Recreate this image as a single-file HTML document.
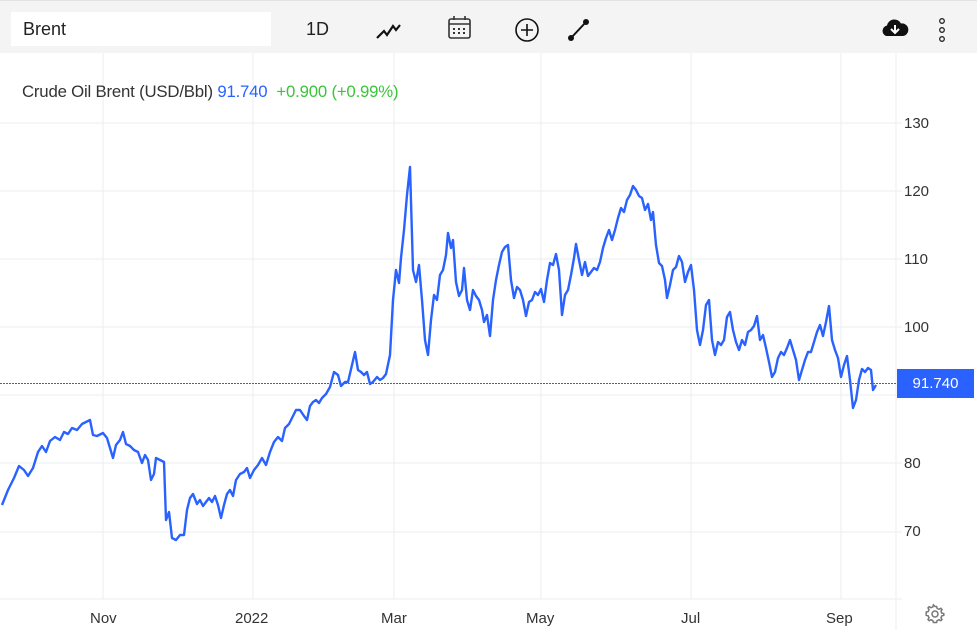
<!DOCTYPE html>
<html><head><style>
body{margin:0;width:977px;height:641px;background:#fff;font-family:"Liberation Sans",sans-serif;overflow:hidden;position:relative}
.tb{position:absolute;left:0;top:0;width:977px;height:53px;background:#f4f4f4;border-top:1px solid #e4e4e4;box-sizing:border-box}
.search{position:absolute;left:11px;top:11px;width:260px;height:34px;background:#fff;font-size:18px;line-height:34px;padding-left:12px;box-sizing:border-box;color:#222}
.t{position:absolute;font-size:18px;color:#222}
.ax{position:absolute;font-size:15px;color:#333}
</style></head><body>
<div class="tb">
<div class="search">Brent</div>
<div class="t" style="left:306px;top:18px">1D</div>
<svg style="position:absolute;left:0;top:0" width="977" height="53">
<path d="M377 37 L384 30 L387 34 L393 25 L396 29 L400 24" stroke="#111" stroke-width="2.2" fill="none"/>
<rect x="449" y="18" width="21" height="19" rx="2" stroke="#333" stroke-width="1.6" fill="none"/>
<line x1="449" y1="23" x2="470" y2="23" stroke="#333" stroke-width="1.6"/>
<line x1="454" y1="15" x2="454" y2="19" stroke="#333" stroke-width="1.6"/><line x1="465" y1="15" x2="465" y2="19" stroke="#333" stroke-width="1.6"/>
<g fill="#333"><rect x="453" y="27" width="2" height="2"/><rect x="458" y="27" width="2" height="2"/><rect x="463" y="27" width="2" height="2"/><rect x="453" y="31" width="2" height="2"/><rect x="458" y="31" width="2" height="2"/><rect x="463" y="31" width="2" height="2"/></g>
<circle cx="527" cy="29" r="11" stroke="#111" stroke-width="1.6" fill="none"/>
<path d="M527 23 V35 M521 29 H533" stroke="#111" stroke-width="1.6"/>
<line x1="571" y1="37" x2="586" y2="21" stroke="#111" stroke-width="2"/>
<circle cx="571" cy="37" r="3" fill="#111"/><circle cx="586" cy="21" r="3" fill="#111"/>
<path d="M886 35 a5.5 5.5 0 0 1 1 -10.5 a7.5 7.5 0 0 1 14 -2 a6 6 0 0 1 2 12.5 z" fill="#111"/>
<path d="M895 24 V31 M891 28 L895 32 L899 28" stroke="#fff" stroke-width="2" fill="none"/>
<circle cx="942" cy="20" r="2.3" stroke="#222" stroke-width="1.3" fill="none"/>
<circle cx="942" cy="29" r="2.3" stroke="#222" stroke-width="1.3" fill="none"/>
<circle cx="942" cy="38" r="2.3" stroke="#222" stroke-width="1.3" fill="none"/>
</svg>
</div>
<svg style="position:absolute;left:0;top:53px" width="977" height="588" viewBox="0 53 977 588">
<g stroke="#eef0f3" stroke-width="1.3">
<line x1="103" y1="53" x2="103" y2="599"/><line x1="253" y1="53" x2="253" y2="599"/><line x1="394" y1="53" x2="394" y2="599"/><line x1="541" y1="53" x2="541" y2="599"/><line x1="691" y1="53" x2="691" y2="599"/><line x1="841" y1="53" x2="841" y2="599"/>
<line x1="0" y1="123" x2="902" y2="123"/><line x1="0" y1="191" x2="902" y2="191"/><line x1="0" y1="259" x2="902" y2="259"/><line x1="0" y1="327" x2="902" y2="327"/><line x1="0" y1="395" x2="902" y2="395"/><line x1="0" y1="463" x2="902" y2="463"/><line x1="0" y1="532" x2="902" y2="532"/>
<line x1="0" y1="599" x2="902" y2="599"/><line x1="896" y1="53" x2="896" y2="630"/>
</g>
<line x1="0" y1="383.5" x2="896" y2="383.5" stroke="#2962ff" stroke-width="1" stroke-dasharray="2 1"/>
<polyline fill="none" stroke="#2962ff" stroke-width="2.4" stroke-linejoin="round" points="2,505 8,490 14,478 19,466 24,470 28,476 33,468 38,452 42,446 46,452 50,441 55,437 60,440 64,432 68,434 72,428 77,430 82,424 86,422 90,420 93,435 97,436 103,433 107,438 110,448 113,458 116,445 120,440 123,432 126,444 130,446 134,450 138,452 142,463 145,455 148,460 151,480 154,474 156,458 160,460 164,462 166,520 169,512 172,538 176,540 180,535 184,535 187,510 190,498 193,494 197,504 200,500 203,506 206,502 209,498 212,502 215,496 218,505 221,518 224,505 227,494 230,490 233,496 236,480 240,474 244,472 247,468 250,478 254,470 258,465 262,458 266,465 270,452 274,442 278,437 282,441 285,428 289,424 293,416 296,410 300,410 304,416 307,420 310,406 313,402 316,400 319,403 322,398 326,394 330,387 334,372 338,375 341,386 345,382 348,382 352,365 355,352 358,370 361,372 364,375 367,372 370,384 373,382 377,377 380,380 383,378 386,374 390,355 393,300 396,270 399,283 401,258 404,230 407,195 410,167 413,270 416,282 419,265 422,300 425,340 428,355 431,320 434,295 437,300 440,275 443,270 446,255 448,233 451,248 453,240 456,282 459,296 462,290 464,268 467,300 470,310 473,290 476,296 479,300 482,310 484,322 487,315 490,336 493,300 496,280 499,265 502,252 505,247 508,245 511,280 514,298 517,287 520,290 523,300 526,316 529,302 532,300 535,292 538,295 541,289 544,302 547,280 550,263 553,265 556,254 559,270 562,315 565,295 568,290 571,275 574,258 576,244 579,260 582,275 585,262 588,276 591,272 594,268 597,270 600,262 603,248 606,238 609,230 612,240 615,230 618,218 621,208 624,212 627,200 630,195 633,186 636,190 639,196 642,198 645,210 648,204 651,220 653,212 656,245 659,263 662,266 665,280 667,298 670,285 673,270 676,267 679,256 682,262 685,282 688,272 691,265 694,290 697,330 700,345 703,330 706,305 709,300 712,340 715,355 718,342 721,345 724,340 727,317 730,312 733,330 736,342 739,350 742,340 745,345 748,332 751,330 754,326 757,316 760,340 763,335 766,348 769,362 772,377 775,372 778,358 781,352 784,355 787,348 790,340 793,350 796,360 799,380 802,370 805,360 808,352 811,352 814,342 817,332 820,325 823,336 826,322 829,306 832,340 835,350 838,358 841,377 844,365 847,356 850,380 853,408 856,400 859,380 862,369 865,372 868,368 871,370 873,390 876,385"/>
<g stroke="#777" stroke-width="1.5" fill="none"><circle cx="935" cy="614" r="3"/><path d="M935 606.5 l1.6 0 l0.6 2 l1.8 0.8 l1.8 -1 l1.2 1.2 l-1 1.8 l0.8 1.8 l2 0.6 l0 1.6 l-2 0.6 l-0.8 1.8 l1 1.8 l-1.2 1.2 l-1.8 -1 l-1.8 0.8 l-0.6 2 l-3.2 0 l-0.6 -2 l-1.8 -0.8 l-1.8 1 l-1.2 -1.2 l1 -1.8 l-0.8 -1.8 l-2 -0.6 l0 -3.2 l2 -0.6 l0.8 -1.8 l-1 -1.8 l1.2 -1.2 l1.8 1 l1.8 -0.8 l0.6 -2 z"/></g>
</svg>
<div class="ax" style="left:22px;top:82px;font-size:16.8px;color:#333;letter-spacing:-0.2px">Crude Oil Brent (USD/Bbl) <span style="color:#2962ff">91.740</span>&nbsp; <span style="color:#3cc43c">+0.900 (+0.99%)</span></div>
<div class="ax" style="left:904px;top:115px">130</div>
<div class="ax" style="left:904px;top:183px">120</div>
<div class="ax" style="left:904px;top:251px">110</div>
<div class="ax" style="left:904px;top:319px">100</div>
<div class="ax" style="left:904px;top:455px">80</div>
<div class="ax" style="left:904px;top:523px">70</div>
<div style="position:absolute;left:897px;top:369px;width:77px;height:29px;background:#2962ff;color:#fff;font-size:15px;line-height:29px;text-align:center">91.740</div>
<div class="ax" style="left:90px;top:610px">Nov</div>
<div class="ax" style="left:235px;top:610px">2022</div>
<div class="ax" style="left:381px;top:610px">Mar</div>
<div class="ax" style="left:526px;top:610px">May</div>
<div class="ax" style="left:681px;top:610px">Jul</div>
<div class="ax" style="left:826px;top:610px">Sep</div>
</body></html>
